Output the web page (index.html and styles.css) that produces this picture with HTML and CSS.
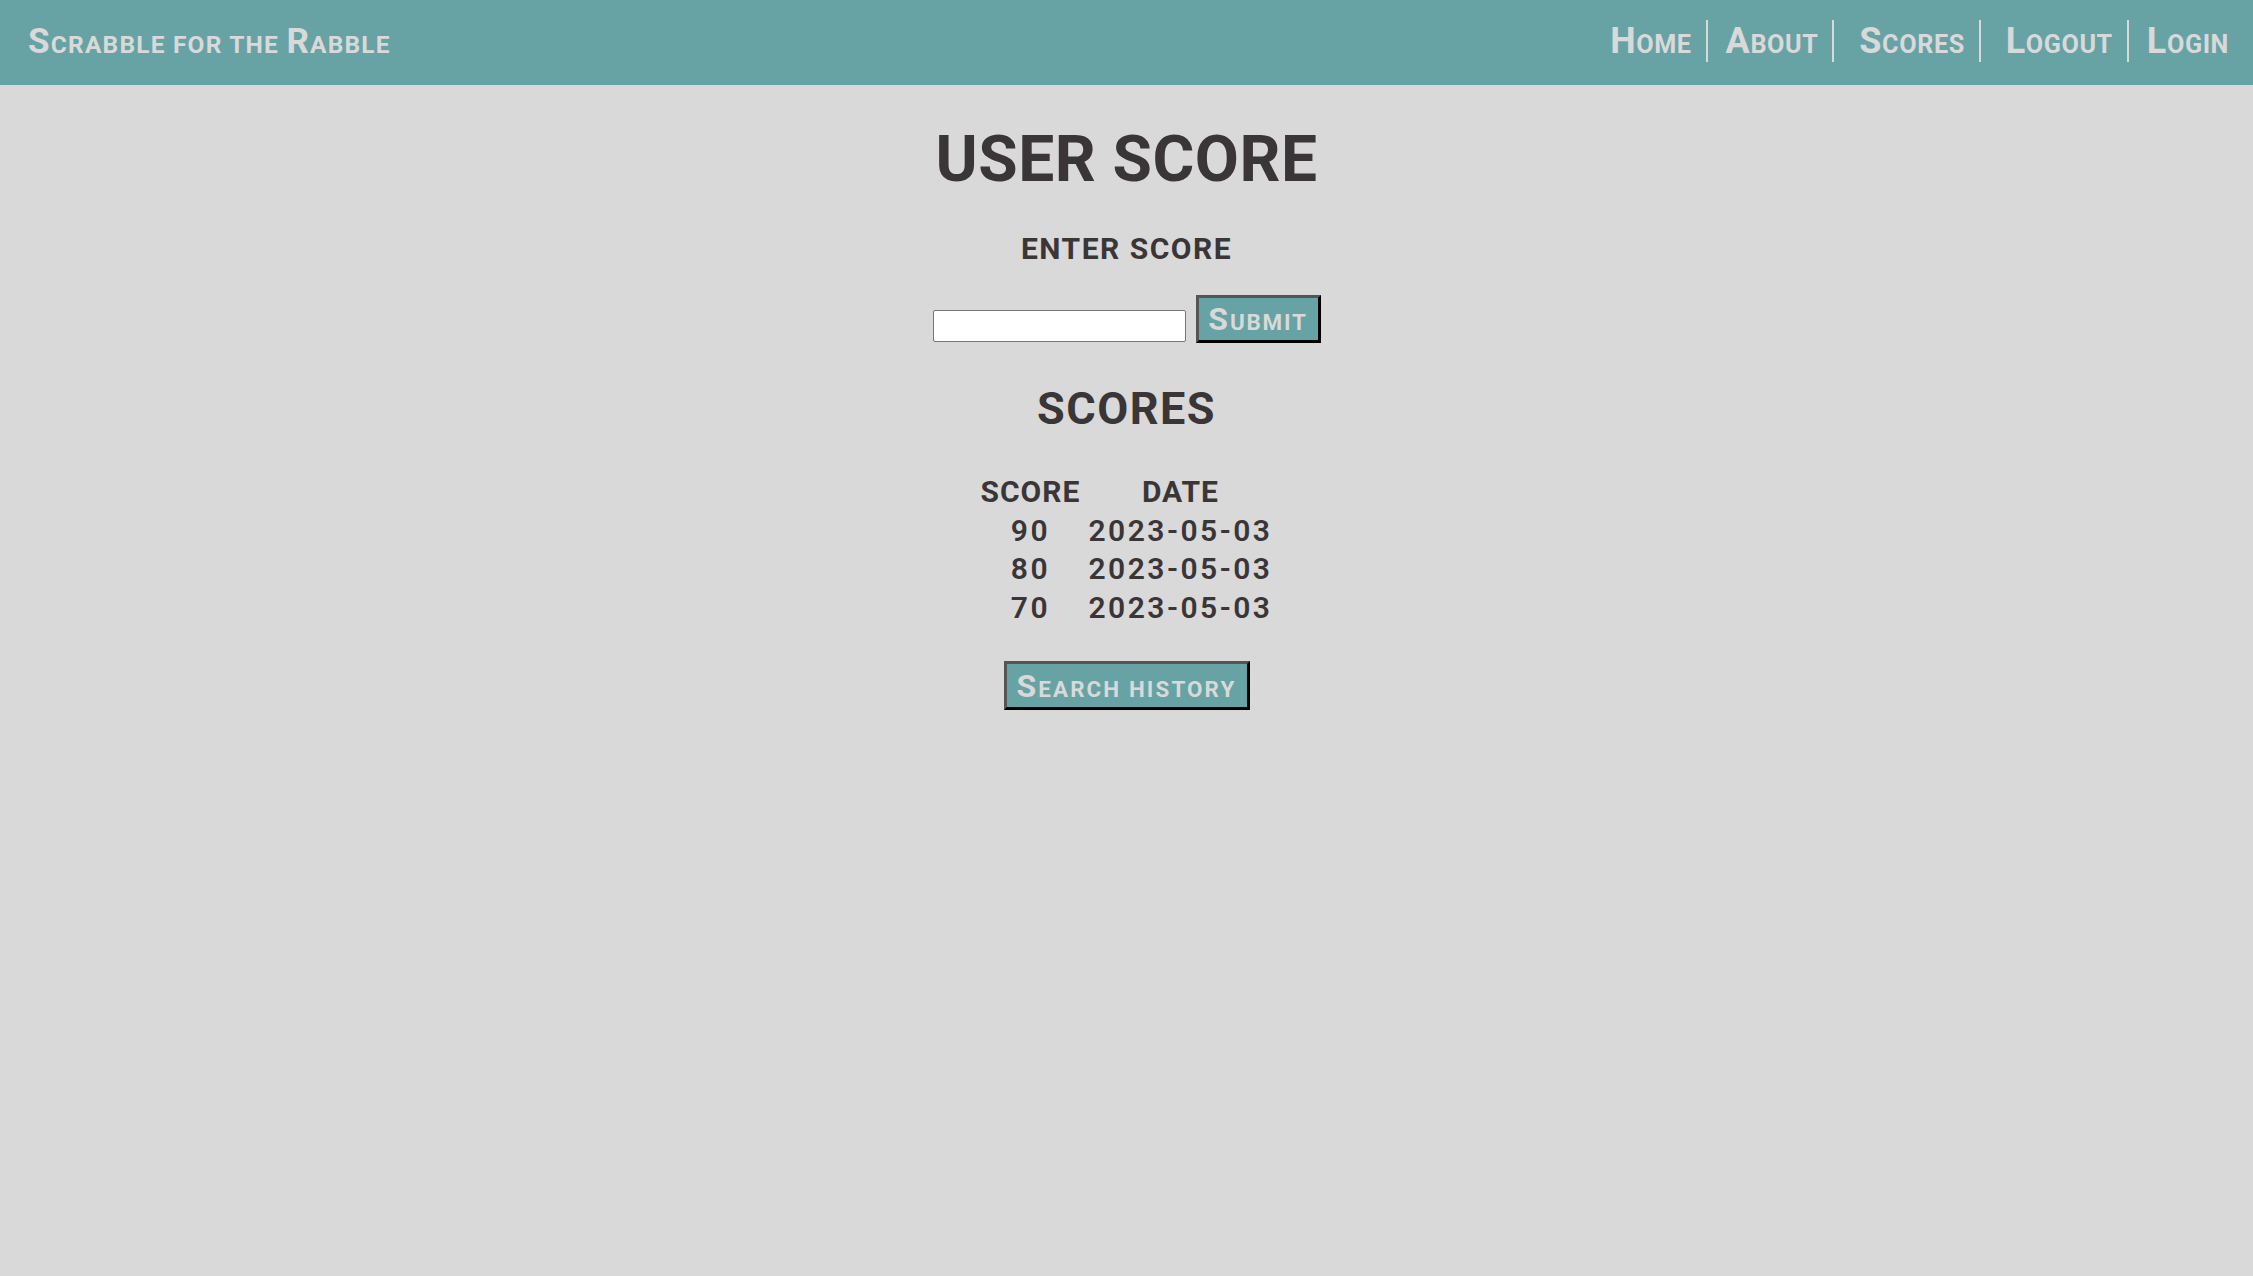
FILE: index.html
```html
<!DOCTYPE html>
<html lang="en">
<head>
<meta charset="utf-8">
<title>User Score</title>
<link rel="stylesheet" href="styles.css">
</head>
<body>
<header class="topbar">
  <a class="brand" href="#"><span class="ini">S</span>crabble for the <span class="ini">R</span>abble</a>
  <nav>
    <ul class="nav">
      <li><a href="#"><span class="ini">H</span>ome</a></li>
      <li><a href="#"><span class="ini">A</span>bout</a></li>
      <li><a href="#">&nbsp;<span class="ini">S</span>cores</a></li>
      <li><a href="#">&nbsp;<span class="ini">L</span>ogout</a></li>
      <li><a href="#"><span class="ini">L</span>ogin</a></li>
    </ul>
  </nav>
</header>
<main class="content">
  <h1 class="title">USER SCORE</h1>
  <h3 class="subtitle">ENTER SCORE</h3>
  <form class="score-form">
    <input class="score-input" type="text">
    <button class="btn btn-submit" type="button"><span class="ini">S</span>ubmit</button>
  </form>
  <h2 class="section">SCORES</h2>
  <table class="scores">
    <thead>
      <tr><th>SCORE</th><th>DATE</th></tr>
    </thead>
    <tbody>
      <tr><td>90</td><td>2023-05-03</td></tr>
      <tr><td>80</td><td>2023-05-03</td></tr>
      <tr><td>70</td><td>2023-05-03</td></tr>
    </tbody>
  </table>
  <button class="btn btn-history" type="button"><span class="ini">S</span>earch history</button>
</main>
</body>
</html>
```
FILE: styles.css
```css
html, body {
  margin: 0;
  padding: 0;
}

body {
  background: #d9d9d9;
  color: #3a3537;
  font-family: Roboto, "Liberation Sans", sans-serif;
  font-weight: 700;
}

/* small-caps look: lower-case letters drawn as capitals at 70% size */
.brand,
.nav a,
.btn {
  text-transform: uppercase;
}

.topbar {
  height: 85px;
  background: #67a3a5;
  display: flex;
  align-items: center;
  justify-content: space-between;
  padding: 0 24px 3px 28px;
  box-sizing: border-box;
}

.brand {
  display: block;
  color: #d9d9d9;
  text-decoration: none;
  font-size: 24.5px;
  line-height: 1;
  letter-spacing: 1.2px;
}

.brand .ini {
  font-size: 35px;
}

.nav {
  list-style: none;
  margin: 0;
  padding: 0;
  display: flex;
  align-items: center;
}

.nav li {
  height: 42px;
  display: flex;
  align-items: center;
  padding: 0 14px 0 18px;
  border-left: 2px solid #d9d9d9;
}

.nav li:first-child {
  border-left: none;
  padding-left: 0;
}

.nav li:last-child {
  padding-right: 0;
}

.nav a {
  display: block;
  color: #d9d9d9;
  text-decoration: none;
  font-size: 25.2px;
  line-height: 1;
  letter-spacing: 0.6px;
}

.nav .ini {
  font-size: 36px;
}

.content {
  display: flex;
  flex-direction: column;
  align-items: center;
}

.title {
  margin: 43px 0 0;
  font-size: 64px;
  line-height: 1;
  letter-spacing: 0.5px;
}

.subtitle {
  margin: 42px 0 0;
  font-size: 30px;
  line-height: 1;
  letter-spacing: 1.5px;
}

.score-form {
  margin-top: 31px;
  display: flex;
  align-items: flex-end;
  gap: 10px;
}

.score-input {
  width: 253px;
  height: 32px;
  box-sizing: border-box;
  border: 1px solid #767676;
  border-radius: 2px;
  background: #fff;
  margin: 0 0 1px;
}

.btn {
  background: #67a3a5;
  color: #d9d9d9;
  font-family: Roboto, "Liberation Sans", sans-serif;
  font-weight: 700;
  font-size: 22.4px;
  line-height: 1;
  border: 3px solid;
  border-color: #555555 #000000 #000000 #555555;
  box-sizing: border-box;
  padding: 0;
  letter-spacing: 1.8px;
  text-align: center;
  cursor: pointer;
}

.btn .ini {
  font-size: 32px;
}

.btn-submit {
  width: 125px;
  height: 48px;
}

.section {
  margin: 43px 0 0;
  font-size: 45px;
  line-height: 1;
  letter-spacing: 1.5px;
}

.scores {
  margin-top: 42px;
  border-collapse: collapse;
  font-size: 30px;
}

.scores th,
.scores td {
  padding: 0 4px;
  line-height: 38.5px;
  text-align: center;
}

.scores th {
  font-weight: 700;
  letter-spacing: 1px;
}

.scores td {
  font-weight: 600;
  letter-spacing: 2.5px;
}

.btn-history {
  margin-top: 34px;
  width: 246px;
  height: 49px;
  letter-spacing: 2.1px;
}
```
